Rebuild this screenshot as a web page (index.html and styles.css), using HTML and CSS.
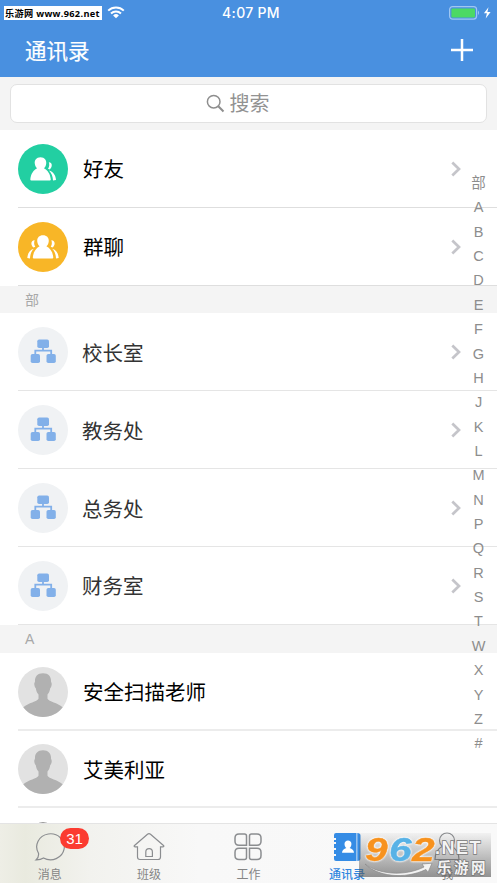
FILE: index.html
```html
<!DOCTYPE html>
<html lang="zh-CN">
<head>
<meta charset="utf-8">
<title>通讯录</title>
<link rel="stylesheet" href="styles.css">
</head>
<body>
<svg class="defs" width="0" height="0" aria-hidden="true">
  <symbol id="chevron" viewBox="0 0 10 16"><path d="M1.300 1.500 8 8l-6.700 6.500" fill="none" stroke="#c5c5ca" stroke-width="2.700"/></symbol>
  <symbol id="org" viewBox="0 0 50 50">
    <circle cx="25" cy="25" r="25" fill="#f0f2f4"/>
    <g fill="#82b0e9"><rect x="19.300" y="12.500" width="11.700" height="8.500" rx="1.800"/><rect x="12.700" y="27" width="9.300" height="9" rx="1.800"/><rect x="28.500" y="27" width="9.300" height="9" rx="1.800"/></g>
    <path d="M25 20v4M17.300 28v-4.300h15.900V28" fill="none" stroke="#82b0e9" stroke-width="1.800"/>
  </symbol>
  <symbol id="person" viewBox="0 0 50 50">
    <circle cx="25" cy="25" r="25" fill="#e2e2e2"/>
    <path d="M25 6.200c-5.500 0-8.300 3.500-8 8.300-.2 1-.9 1.500-.7 3 .2 2 .9 3.200 1.500 3.800.5 2.800 1.300 4.800 2.700 6.200v4.200c-1.500 3-10 4-15.200 8.500C9.500 46 17 50 25 50s15.500-4 19.700-9.800c-5.200-4.500-13.700-5.500-15.200-8.500v-4.200c1.400-1.400 2.200-3.400 2.700-6.200.6-.6 1.300-1.800 1.500-3.800.2-1.500-.5-2-.7-3 .3-4.800-2.500-8.300-8-8.300z" fill="#b1b1b1"/>
  </symbol>
</svg>
<div class="screen">
  <header class="header">
    <div class="status">
      <svg class="carrier" width="60" height="16"><rect x="0" y="2" width="14" height="13" rx="6" fill="#fff"/></svg>
      <div class="site">乐游网 www.962.net</div>
      <svg class="wifi" width="18" height="13" viewBox="0 0 18 13"><path d="M1.200 4.600a11.300 11.300 0 0 1 15.600 0M4 7.500a7.200 7.200 0 0 1 10 0" fill="none" stroke="#fff" stroke-width="2"/><path d="m9 12.300-2.900-2.900a4.200 4.200 0 0 1 5.800 0z" fill="#fff"/></svg>
      <time class="clock">4:07 PM</time>
      <svg class="battery" width="44" height="16" viewBox="0 0 44 16"><rect x=".6" y="1.600" width="27" height="12.500" rx="3" fill="none" stroke="#a0c7f2" stroke-width="1.200"/><rect x="2.400" y="3.400" width="23.600" height="9" rx="1.200" fill="#4cd964"/><path d="M29 5.500q2 2.200 0 4.600z" fill="#a0c7f2"/><path d="M39.500 2.300 34.900 8.300h3l-1.200 5.300 4.900-6.500h-3.200z" fill="#fff"/></svg>
    </div>
    <div class="nav"><h1>通讯录</h1><svg class="plus" width="24" height="24" viewBox="0 0 24 24"><path d="M12 1v22M1 12h22" stroke="#fff" stroke-width="2.500"/></svg></div>
  </header>
  <div class="search"><div class="search-box">
    <svg width="19" height="19" viewBox="0 0 19 19"><circle cx="7.700" cy="7.700" r="6.300" fill="none" stroke="#8e8e8e" stroke-width="1.500"/><path d="m12.300 12.300 5.200 5.200" stroke="#8e8e8e" stroke-width="2"/></svg>
    <span>搜索</span></div></div>
  <main class="list">
    <div class="row">
      <svg class="avatar" viewBox="0 0 50 50"><circle cx="25" cy="25" r="25" fill="#22cfa2"/><path d="M22.500 13.300c-4.200 0-6.200 3-5.700 6.500.3 2 1.200 3.600 2.300 4.500-3.500 1.900-6.300 5.400-6.800 11.200q0 1 1 1h18.500q1 0 1-1c-.5-5.800-3.300-9.300-6.900-11.200 1.200-.9 2-2.500 2.300-4.500.5-3.500-1.500-6.500-5.700-6.500zM30.800 18.300c3.300-.2 4.300 4.500.7 7.300l-1.500-.9c1.400-1.800 1.600-4.500.8-6.400zM31 26.500c4.300 1.200 6.800 5 7 9.500l-3 .5c-.1-4-1.400-7.300-4-10z" fill="#fff"/></svg>
      <div class="name">好友</div><svg class="arrow"><use href="#chevron"/></svg></div>
    <div class="row">
      <svg class="avatar" viewBox="0 0 50 50"><circle cx="25" cy="25" r="25" fill="#f8b627"/><path d="M25 13.300c-4.200 0-6.200 3-5.700 6.500.3 2 1.200 3.600 2.300 4.500-3.500 1.900-6.300 5.400-6.800 11.200q0 1 1 1h18.500q1 0 1-1c-.5-5.800-3.300-9.300-6.900-11.200 1.200-.9 2-2.500 2.300-4.500.5-3.500-1.500-6.500-5.700-6.500zM33.300 18.300c3.700-.2 4.700 4.500 1.100 7.300l-1.700-.9c1.400-1.800 1.400-4.500.6-6.400zM34.200 26.800c4.300 1.200 6.200 5 6.500 9.200l-2.700.5c-.1-4-1.300-7-3.800-9.700zM16.700 18.300c-3.700-.2-4.700 4.500-1.100 7.300l1.700-.9c-1.400-1.800-1.400-4.500-.6-6.400zM15.800 26.800c-4.300 1.200-6.200 5-6.500 9.200l2.700.5c.1-4 1.300-7 3.800-9.700z" fill="#fff"/></svg>
      <div class="name">群聊</div><svg class="arrow"><use href="#chevron"/></svg></div>
    <h2>部</h2>
    <div class="row dept"><svg class="avatar"><use href="#org"/></svg><div class="name">校长室</div><svg class="arrow"><use href="#chevron"/></svg></div>
    <div class="row dept"><svg class="avatar"><use href="#org"/></svg><div class="name">教务处</div><svg class="arrow"><use href="#chevron"/></svg></div>
    <div class="row dept"><svg class="avatar"><use href="#org"/></svg><div class="name">总务处</div><svg class="arrow"><use href="#chevron"/></svg></div>
    <div class="row dept"><svg class="avatar"><use href="#org"/></svg><div class="name">财务室</div><svg class="arrow"><use href="#chevron"/></svg></div>
    <h2>A</h2>
    <div class="row contact"><svg class="avatar"><use href="#person"/></svg><div class="name">安全扫描老师</div></div>
    <div class="row contact"><svg class="avatar"><use href="#person"/></svg><div class="name">艾美利亚</div></div>
    <div class="row contact next"><svg class="avatar" viewBox="0 0 50 50"><path d="M18 6.500a12 12 0 0 1 14 0z" fill="#777"/></svg></div>
  </main>
  <nav class="index"><span>部</span><span>A</span><span>B</span><span>C</span><span>D</span><span>E</span><span>F</span><span>G</span><span>H</span><span>J</span><span>K</span><span>L</span><span>M</span><span>N</span><span>P</span><span>Q</span><span>R</span><span>S</span><span>T</span><span>W</span><span>X</span><span>Y</span><span>Z</span><span>#</span></nav>
  <footer class="tabs">
    <div class="tab"><svg viewBox="0 0 32 32"><path d="M4.500 22.200A13.800 13.000 0 1 1 9.500 27C7.500 28.300 4.700 29 2 28.900c2-1.600 2.900-4 2.500-6.700z"/></svg><span>消息</span><b class="badge">31</b></div>
    <div class="tab"><svg viewBox="0 0 32 32"><path d="M14.500 3.200q1.500-1.200 3 0L30.500 14.500q1 1-.5 1.300h-2.500V26q0 2.500-2.500 2.500H7Q4.500 28.500 4.500 26V15.800H2q-1.500-.3-.5-1.300zM12.800 25.500V21a3.300 3.300 0 0 1 6.600 0v4.500z"/></svg><span>班级</span></div>
    <div class="tab"><svg class="grid-icon" viewBox="0 0 32 32"><path d="M7 3h5.500q2 0 2 2v9.300H7q-4 0-4-4V7q0-4 4-4zM19.500 3H25q4 0 4 4v3.300q0 4-4 4h-7.500V5q0-2 2-2zM7 17.300h7.500v9.200q0 2-2 2H7q-4 0-4-4v-3.200q0-4 4-4zM17.500 17.300H25q4 0 4 4v3.200q0 4-4 4h-5.500q-2 0-2-2z"/></svg><span>工作</span></div>
    <div class="tab active"><svg viewBox="0 0 32 32"><path class="solid" d="M5 2h20.500v28H5q-2 0-2-2v-3h2v-2H3v-4h2v-2H3v-4h2v-2H3V9h2V7H3V4q0-2 2-2zM26.300 2q3.200 0 3.200 2.500v23Q29.500 30 26.300 30z"/><path class="cut" d="M17 9.500c-4.300 0-4.300 5.500-1.600 7.600-2.500.8-4.300 2.100-4.400 4.700h12c-.1-2.600-1.900-3.900-4.400-4.700 2.700-2.100 2.700-7.600-1.600-7.600z"/></svg><span>通讯录</span></div>
    <div class="tab"><svg viewBox="0 0 32 32"><circle cx="16" cy="9.500" r="7.500"/><path d="M11 15.500C6.500 18 4 22 4 28.500h24c0-6.500-2.500-10.500-7-13"/></svg><span>我</span></div>
  </footer>
  <div class="mark">
    <div class="mark-num"><i>9</i><i class="blue">6</i><i>2</i></div>
    <div class="mark-side"><span class="net">.NET</span><span class="cn">乐游网</span></div>
    <svg class="swoosh" width="70" height="14" viewBox="0 0 70 14"><path d="M1 1c13 10 39 13 59 3l-2-3 10-.8-4 9.300-2-3C40 17 13 13 1 1z" fill="#f3f3f3" stroke="#8a8a8a" stroke-width=".7"/></svg>
  </div>
</div>
</body>
</html>
```
FILE: styles.css
```css
* { box-sizing: border-box; }
body { margin: 0; font-family: Inter, "Noto Sans CJK SC", sans-serif; }
.defs { position: absolute; }
.screen { position: relative; width: 497px; height: 883px; overflow: hidden; background: #fff; }
svg { display: block; flex: none; }

.header { height: 77px; background: #4990e0; color: #fff; }
.status { position: relative; display: flex; align-items: center; height: 25px; padding: 0 6px 0 4px; }
.carrier { position: absolute; left: 5px; top: 5px; }
.site { position: relative; width: 98px; height: 14px; background: #fff; color: #000; font: bold 9.2px/15px "Open Sans", "Noto Sans CJK SC", sans-serif; letter-spacing: 0.32px; padding-left: 1px; white-space: nowrap; overflow: hidden; }
.wifi { margin-left: 5px; }
.clock { position: absolute; left: 0; right: 0; top: 4px; padding-left: 5px; text-align: center; font-size: 14px; line-height: 18px; font-weight: 500; letter-spacing: 0.3px; }
.battery { margin-left: auto; margin-right: -2px; }
.nav { display: flex; align-items: center; justify-content: space-between; height: 50px; padding: 0 23px 0 25px; }
h1 { margin: 0; padding-bottom: 1px; font-family: "Noto Sans CJK SC", sans-serif; font-size: 21.5px; line-height: 30px; font-weight: 400; -webkit-text-stroke: 0.200px #fff; }

.search { height: 53px; padding: 7px 10px; background: #f4f4f4; }
.search-box { display: flex; align-items: center; justify-content: center; gap: 5px; height: 39px; padding-right: 22px; border: 1px solid #e2e2e2; border-radius: 7px; background: #fff; color: #929292; font-size: 20px; line-height: 30px; }

.row { position: relative; display: flex; align-items: center; gap: 15px; height: 77.85px; padding: 0 36px 0 18px; color: #000; font-size: 20.5px; }
.row::after { content: ""; position: absolute; left: 18px; right: 0; bottom: 0; height: 1px; background: #dedede; }
.avatar { width: 50px; height: 50px; }
.name { flex: 1; line-height: 30px; padding-top: 3px; }
.arrow { width: 10px; height: 16px; }
.dept { color: #333; gap: 14px; }
.dept::after { background: #e5e5e5; }
.contact::after { height: 2px; background: #ececec; }
.next { align-items: flex-start; padding-top: 10px; }
h2 { margin: 0; height: 27.800px; padding-left: 25px; background: #f4f4f4; color: #a8a8a8; font-family: "Liberation Sans", "Noto Sans CJK SC", sans-serif; font-size: 14px; line-height: 28px; font-weight: 400; }

.index { position: absolute; top: 171px; left: 468px; width: 21px; display: grid; grid-auto-rows: 24.370px; color: #8d8d8d; font-family: "Liberation Sans", "Noto Sans CJK SC", sans-serif; font-size: 14.500px; line-height: 25px; text-align: center; }

.tabs { position: absolute; left: 0; right: 0; bottom: 0; height: 60px; display: grid; grid-template-columns: repeat(5, 1fr); border-top: 1px solid #e4e4e4; background: linear-gradient(90deg, #eeeee6, #e9eadf 5%, #f2f2ee 18%, #f8f8f8 40%, #f9f9f9); }
.tab { position: relative; display: flex; flex-direction: column; align-items: center; padding-top: 7px; color: #858585; font-size: 12px; line-height: 18px; }
.tab svg { width: 32px; height: 32px; fill: none; stroke: #8b8d90; stroke-width: 1.2; }
.tab .grid-icon { stroke-width: 1.500; }
.tab span { margin-top: 3px; }
.tab.active { color: #3086df; font-weight: 500; padding-right: 2px; }
.tab .solid { fill: #358ce5; stroke: none; }
.tab .cut { fill: #fff; stroke: none; }
.badge { position: absolute; left: 60px; top: 4px; width: 29px; height: 21px; border-radius: 11px; background: #fb3b30; color: #fff; font-family: "Liberation Sans", sans-serif; font-size: 15px; line-height: 22px; font-weight: 400; text-align: center; }

.mark { position: absolute; left: 359px; top: 833px; width: 132px; height: 44px; display: flex; background: linear-gradient(180deg, rgba(100,100,100,.05), rgba(90,90,90,.65)); }
.mark-num { width: 76px; flex: none; padding-left: 6px; display: flex; font: italic bold 34px/32px "Liberation Sans", sans-serif; color: #f7921e; -webkit-text-stroke: 0.400px #f7921e; filter: drop-shadow(0 0 1px #fff) drop-shadow(0 0 0.500px #fff); }
.mark-num i { flex: none; width: 19px; transform: scaleX(1.2); transform-origin: left; margin-right: 4.500px; }
.mark-num .blue { color: #58b2e6; -webkit-text-stroke-color: #58b2e6; }
.mark-side { display: flex; flex-direction: column; color: #f4f4f4; -webkit-text-stroke: 1.400px #777; paint-order: stroke fill; white-space: nowrap; }
.net { height: 25px; font: bold 18px/31px "Liberation Sans", sans-serif; letter-spacing: 1.500px; }
.cn { margin-left: 2px; font: bold 14.500px/18px "Noto Sans CJK SC", sans-serif; letter-spacing: 2.500px; height: 18px; }
.swoosh { position: absolute; left: 5px; top: 30px; }
```
